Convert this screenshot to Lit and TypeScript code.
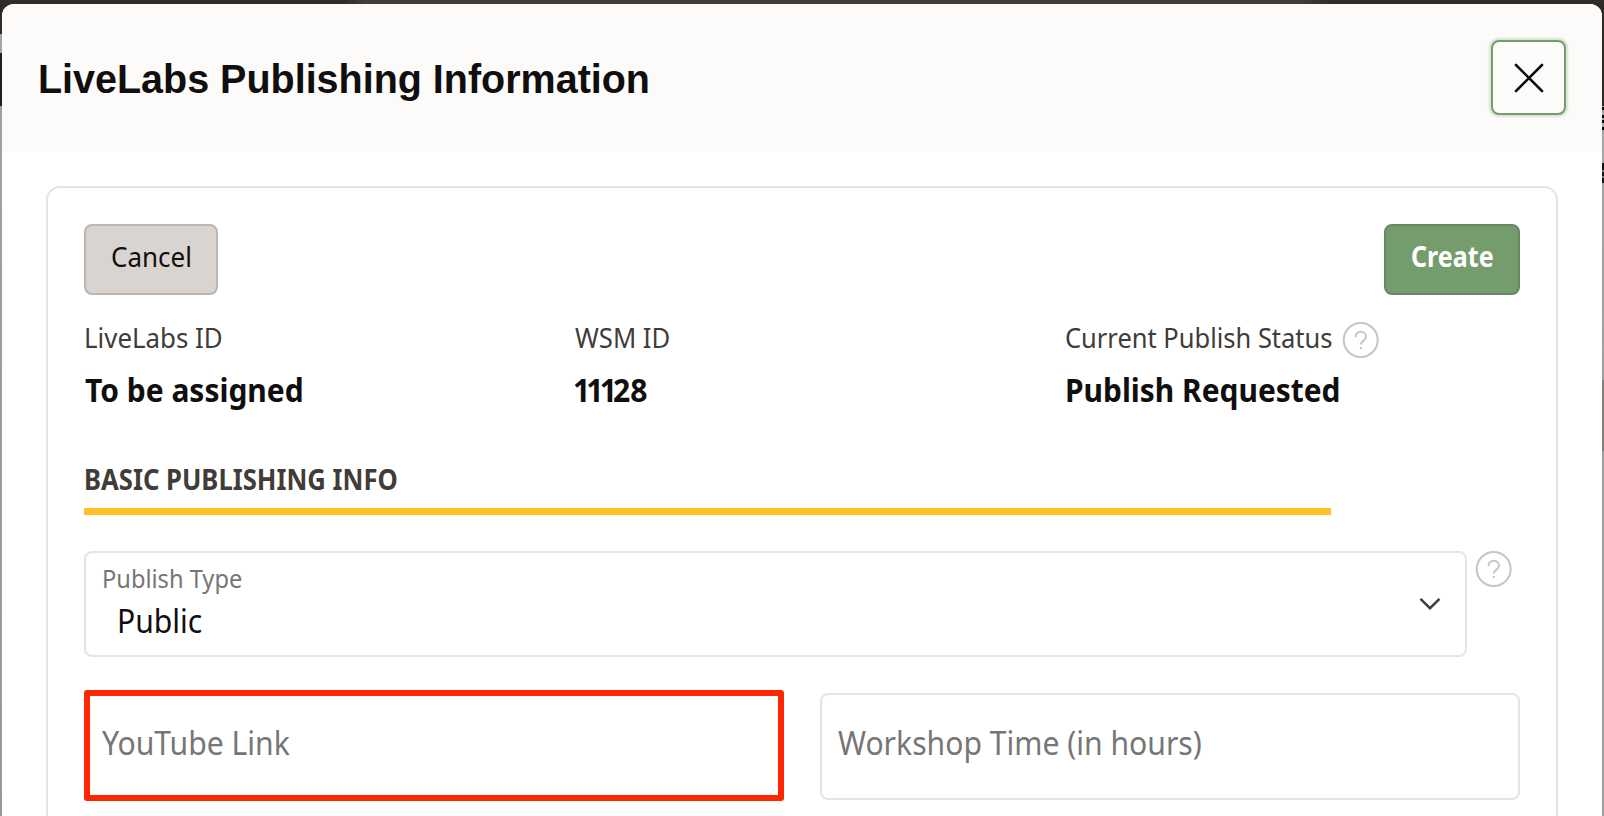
import { LitElement, html, css } from "lit";
import { customElement } from "lit/decorators.js";

@customElement("help-icon")
class HelpIcon extends LitElement {
  static styles = css`
    :host { display: block; width: 37px; height: 37px; }
    svg { display: block; }
  `;
  render() {
    return html`<svg width="37" height="37" viewBox="0 0 37 37" fill="none" stroke="#c5c5c5" stroke-width="2">
      <circle cx="18.7" cy="18" r="17"></circle>
      <path d="M13.600 15.200v-.6c0-2.800 2.200-4.800 5.200-4.800s5.200 2 5.200 4.700c0 2.200-1.200 3.300-2.700 4.300-1.600 1.100-2.500 1.800-2.500 3.800" stroke-width="2"></path>
      <rect x="17.800" y="25" width="2" height="2" fill="#c5c5c5" stroke="none"></rect>
    </svg>`;
  }
}

@customElement("app-root")
class AppRoot extends LitElement {
  static styles = css`
    :host {
      display: block;
      box-sizing: border-box;
      width: 1604px;
      height: 816px;
      padding: 4px 2px 0;
      overflow: hidden;
      font-family: "Noto Sans", sans-serif;
      color: #100f0e;
      background:
        linear-gradient(90deg, #322d2a 345px, #403e37 365px, #403e37 1300px, #322d2a 1330px) 0 0 / 1604px 4px no-repeat,
        linear-gradient(180deg, #2d2a28 34px, #a5a5a5 34px, #a5a5a5 53px, #202020 53px, #202020 106px, #a0a0a0 106px, #999 816px) 0 0 / 16px 816px no-repeat,
        linear-gradient(180deg, #2d2a28 106px, #a5a5a5 106px, #a5a5a5 107px, #050505 107px, #050505 110px, #a5a5a5 110px, #a5a5a5 115px, #050505 115px, #050505 118px, #a5a5a5 118px, #a5a5a5 120px, #050505 120px, #050505 123px, #a5a5a5 123px, #a5a5a5 127px, #050505 127px, #050505 130px, #a5a5a5 130px, #a5a5a5 163px, #151515 163px, #151515 170px, #777 170px, #777 172px, #151515 172px, #151515 176px, #777 176px, #777 178px, #151515 178px, #151515 183px, #a0a0a0 183px, #9d9d9d 380px, #85807b 380px, #85807b 451px, #9d9d9d 451px) 1588px 0 / 16px 816px no-repeat,
        #9d9d9d;
    }
    * { box-sizing: border-box; }
    .dialog { height: 812px; background: #fff; border-radius: 12px 12px 0 0; overflow: hidden; }
    .header {
      display: flex; align-items: center; justify-content: space-between;
      height: 147px; padding: 0 36px 0 36.300px; background: #fcfbfa;
    }
    .t { display: block; white-space: nowrap; transform-origin: 0 50%; }
    h1, h2 { margin: 0; }
    h1 {
      font: 700 40px/48px "Liberation Sans", sans-serif; padding-top: 3px;
    }
    h1 .t { transform: scaleX(.987); }
    .close {
      display: grid; place-items: center; width: 75px; height: 75px; padding: 0;
      border: 2px solid #759c6c; border-radius: 8px; background: #fcfbfa;
      box-shadow: 0 0 2px 1.500px rgba(117, 156, 108, .25);
    }
    .card {
      height: 700px; margin: 35px 44px 0; padding: 36px;
      border: 2px solid #e4e4e4; border-radius: 14px; background: #fff;
    }
    .actions { display: flex; justify-content: space-between; }
    .btn {
      display: flex; align-items: center;
      height: 71px; padding: 0 0 7px 25px; border-radius: 8px; text-align: left;
      font: 400 28px/40px "Noto Sans", sans-serif; border: 2px solid #bcb6b1;
      background: #d9d4d0; color: #100f0e;
    }
    .cancel { width: 134px; }
    .cancel .t { transform: scaleX(.928); }
    .create { width: 136px; font-weight: 700; border-color: #65895d; background: #759c6c; color: #fff; }
    .create .t { transform: scaleX(.895); }
    .facts { display: grid; grid-template-columns: repeat(3, 490.500px); margin-top: 22px; width: 1436px; }
    .label { display: flex; height: 40px; font-size: 28px; line-height: 40px; color: #403c38; }
    .value { margin-top: 11px; font-size: 32px; line-height: 44px; font-weight: 700; }
    .f0 .label { margin-left: -.200px; }
    .f0 .label .t { transform: scaleX(.924); }
    .f0 .value .t { transform: scaleX(.937); margin-left: .500px; }
    .f1 .label .t { transform: scaleX(.916); }
    .f1 .value .t { display: flex; transform: scaleX(.94); margin-left: -1.500px; }
    .ones { letter-spacing: -4.100px; }
    .f2 .label .t { transform: scaleX(.91); width: 277px; margin-left: .400px; }
    .f2 .value .t { transform: scaleX(.935); margin-left: -.200px; }
    .f2 help-icon { margin-top: 5px; }
    h2 {
      width: 1247px; margin-top: 47px; padding-bottom: 9px;
      border-bottom: 7px solid #ffc226; font-size: 28px; line-height: 40px; color: #403c38;
    }
    h2 .t { transform: scaleX(.916); margin-left: -.300px; }
    .row { display: flex; margin-top: 36px; }
    .select {
      display: flex; justify-content: space-between; width: 1383px; height: 106px;
      padding: 10px 24.500px 0 15.500px; border: 2px solid #e5e5e5; border-radius: 8px; margin-right: 8px;
    }
    .caption { font-size: 25px; line-height: 30px; color: #767676; }
    .caption .t { transform: scaleX(.945); }
    .choice { margin: 8px 0 0 15px; font-size: 32px; line-height: 40px; }
    .choice .t { transform: scaleX(.94); }
    .chevron { margin-top: 34px; }
    .fields { display: grid; grid-template-columns: 700px 700px; gap: 36px; margin-top: 36px; }
    .field {
      position: relative; height: 107px; padding: 28px 0 0 16px;
      border: 2px solid #e5e5e5; border-radius: 8px;
      font-size: 32px; line-height: 40px; color: #767676;
    }
    .field .t { transform: scaleX(.941); }
    .marker {
      position: absolute; left: -2.500px; top: -5px; width: 700px; height: 110.500px;
      border: 6px solid #ff2600; border-radius: 3px;
    }
  `;

  private facts = [
    { label: "LiveLabs ID", value: "To be assigned", help: false },
    { label: "WSM ID", value: html`<span class="ones">111</span>28`, help: false },
    { label: "Current Publish Status", value: "Publish Requested", help: true },
  ];

  render() {
    return html`<section class="dialog">
      <header class="header">
        <h1><span class="t">LiveLabs Publishing Information</span></h1>
        <button class="close" aria-label="Close">
          <svg width="30" height="30" viewBox="0 0 30 30" fill="none" stroke="#100f0e" stroke-width="2.600" stroke-linecap="round">
            <path d="M2 2l26 26M28 2L2 28"></path>
          </svg>
        </button>
      </header>
      <div class="card">
        <div class="actions">
          <button class="btn cancel"><span class="t">Cancel</span></button>
          <button class="btn create"><span class="t">Create</span></button>
        </div>
        <div class="facts">
          ${this.facts.map((f, i) => html`<div class="f${i}">
            <div class="label"><span class="t">${f.label}</span>${f.help ? html`<help-icon></help-icon>` : ""}</div>
            <div class="value"><span class="t">${f.value}</span></div>
          </div>`)}
        </div>
        <h2><span class="t">BASIC PUBLISHING INFO</span></h2>
        <div class="row">
          <div class="select">
            <div>
              <div class="caption"><span class="t">Publish Type</span></div>
              <div class="choice"><span class="t">Public</span></div>
            </div>
            <svg class="chevron" width="22" height="14" viewBox="0 0 22 14" fill="none" stroke="#403c38" stroke-width="2.400">
              <path d="M1.500 1.800L11 11.200l9.500-9.400"></path>
            </svg>
          </div>
          <help-icon></help-icon>
        </div>
        <div class="fields">
          <div class="field"><span class="t">YouTube Link</span><div class="marker"></div></div>
          <div class="field"><span class="t">Workshop Time (in hours)</span></div>
        </div>
      </div>
    </section>`;
  }
}
